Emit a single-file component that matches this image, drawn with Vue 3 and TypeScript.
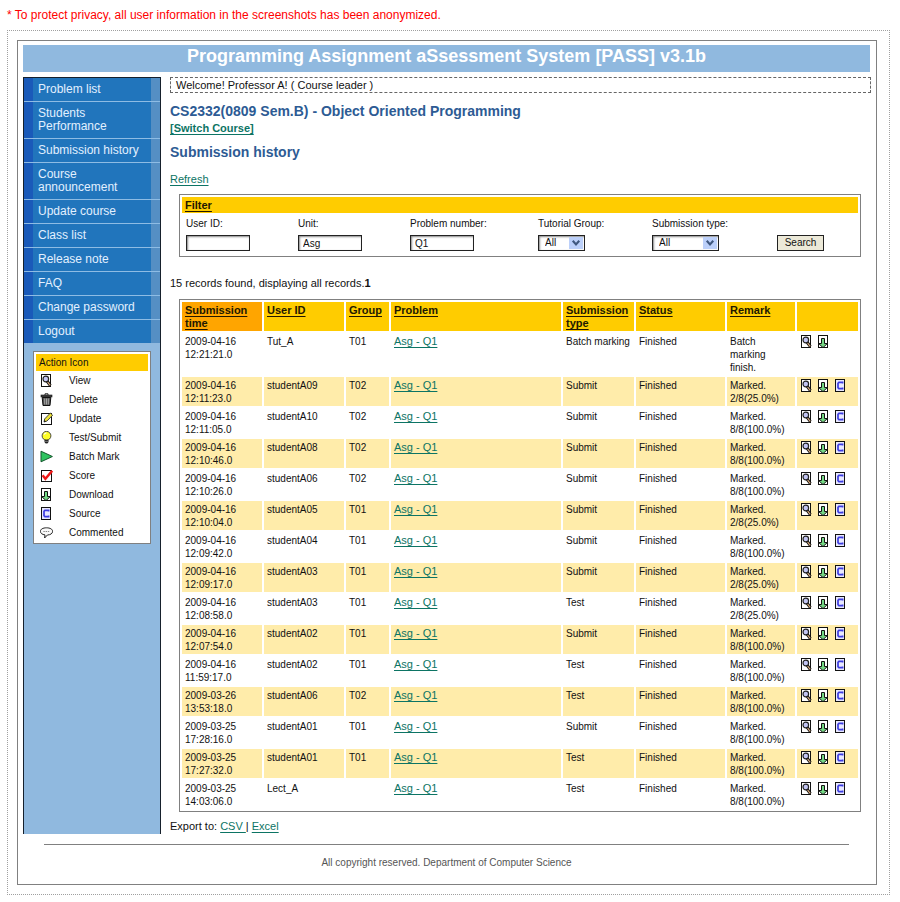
<script setup lang="ts">
import { ref, h, type FunctionalComponent } from 'vue'

type IconName = 'view' | 'delete' | 'update' | 'test' | 'batch' | 'score' | 'download' | 'source' | 'comment'

interface Shape {
  tag: string
  attrs: Record<string, string | number>
}

interface Submission {
  date: string
  time: string
  user: string
  group: string
  kind: string
  remark: string[]
  source: boolean
}

const s = (tag: string, attrs: Record<string, string | number>): Shape => ({ tag, attrs })
const page = (fill: string) => s('rect', { x: 1.5, y: 0.5, width: 9, height: 12, fill, stroke: '#111' })

const shapes: Record<IconName, Shape[]> = {
  view: [
    page('#fff'),
    s('path', { d: 'M7 7 L10.4 11.6', stroke: '#111', 'stroke-width': 3 }),
    s('path', { d: 'M7.6 8 L10.2 11.4', stroke: '#e0b080', 'stroke-width': 1.2 }),
    s('circle', { cx: 5.8, cy: 5, r: 2.8, fill: '#c3c6f4', stroke: '#222', 'stroke-width': 1.2 }),
  ],
  delete: [
    s('path', { d: 'M5 2 V0.8 H8 V2', fill: 'none', stroke: '#222' }),
    s('rect', { x: 1, y: 2, width: 11, height: 2, fill: '#444', stroke: '#111', 'stroke-width': 0.6 }),
    s('path', { d: 'M2.2 4.5 H10.8 L10 12.5 H3 Z', fill: '#555', stroke: '#111' }),
    s('path', { d: 'M4.7 5.5 V11.5 M6.5 5.5 V11.5 M8.3 5.5 V11.5', stroke: '#bbb', 'stroke-width': 0.8 }),
  ],
  update: [
    s('rect', { x: 1.5, y: 1.5, width: 10, height: 11, fill: '#fff', stroke: '#111' }),
    s('path', { d: 'M4 10 L4.6 7 L10.4 1 L12.6 3.2 L7 9 Z', fill: '#f0e53a', stroke: '#333', 'stroke-width': 0.9 }),
    s('path', { d: 'M4 10 L4.5 8 L6 9.4 Z', fill: '#111' }),
  ],
  test: [
    s('circle', { cx: 6.5, cy: 4.8, r: 4.4, fill: '#ffff28', stroke: '#333', 'stroke-width': 0.9 }),
    s('path', { d: 'M4.2 3.6 Q4.8 2.2 6.4 2', fill: 'none', stroke: '#fff', 'stroke-width': 1.2 }),
    s('path', { d: 'M4.5 8.8 H8.5 V11 Q8 12.6 6.5 12.6 Q5 12.6 4.5 11 Z', fill: '#222' }),
    s('path', { d: 'M5 10.4 H8', stroke: '#aaa', 'stroke-width': 0.6 }),
  ],
  batch: [s('path', { d: 'M1 1.2 L12.4 6.5 L1 11.8 Z', fill: '#2fc35f', stroke: '#14552c', 'stroke-width': 1 })],
  score: [
    s('rect', { x: 1.5, y: 1.5, width: 10, height: 11, fill: '#fff', stroke: '#111' }),
    s('path', { d: 'M2.6 6.2 L5.4 9.8 L12.2 1.8', fill: 'none', stroke: '#f01818', 'stroke-width': 2.4 }),
  ],
  download: [
    page('#fff'),
    s('path', { d: 'M4.5 3.5 H7.5 V8.5 H10.4 L6 12.6 L1.6 8.5 H4.5 Z', fill: '#74d884', stroke: '#111' }),
  ],
  source: [
    page('#e8e8ff'),
    s('path', { d: 'M8.6 4.6 V3.4 H4.9 L4 4.3 V8.7 L4.9 9.6 H8.6 V8.4', fill: 'none', stroke: '#3c3ce0', 'stroke-width': 1.7 }),
  ],
  comment: [
    s('path', {
      d: 'M6.5 1.8 C10 1.8 12.6 3.2 12.6 5.3 C12.6 7.6 10.4 8.9 7.4 9 L4.6 12 L5 8.9 C2.2 8.6 0.4 7.2 0.4 5.3 C0.4 3.2 3 1.8 6.5 1.8 Z',
      fill: '#fafafa', stroke: '#222',
    }),
    s('path', { d: 'M3.4 5.5 H9.8', stroke: '#888', 'stroke-width': 1, 'stroke-dasharray': '1.4 0.8' }),
  ],
}

const Icon: FunctionalComponent<{ name: IconName }> = (props) =>
  h('svg', { width: 13, height: 13, viewBox: '0 0 13 13', 'aria-hidden': 'true' },
    shapes[props.name].map((shape) => h(shape.tag, shape.attrs)))
Icon.props = ['name']

const menu: string[] = [
  'Problem list', 'Students Performance', 'Submission history', 'Course announcement', 'Update course',
  'Class list', 'Release note', 'FAQ', 'Change password', 'Logout',
]

const legend: { icon: IconName; label: string }[] = [
  { icon: 'view', label: 'View' },
  { icon: 'delete', label: 'Delete' },
  { icon: 'update', label: 'Update' },
  { icon: 'test', label: 'Test/Submit' },
  { icon: 'batch', label: 'Batch Mark' },
  { icon: 'score', label: 'Score' },
  { icon: 'download', label: 'Download' },
  { icon: 'source', label: 'Source' },
  { icon: 'comment', label: 'Commented' },
]

const columns: string[] = ['Submission time', 'User ID', 'Group', 'Problem', 'Submission type', 'Status', 'Remark']

const row = (date: string, time: string, user: string, group: string, kind: string, score: string): Submission =>
  ({ date, time, user, group, kind, remark: ['Marked.', score], source: true })

const full = '8/8(100.0%)'
const quarter = '2/8(25.0%)'

const rows: Submission[] = [
  { date: '2009-04-16', time: '12:21:21.0', user: 'Tut_A', group: 'T01', kind: 'Batch marking', remark: ['Batch', 'marking', 'finish.'], source: false },
  row('2009-04-16', '12:11:23.0', 'studentA09', 'T02', 'Submit', quarter),
  row('2009-04-16', '12:11:05.0', 'studentA10', 'T02', 'Submit', full),
  row('2009-04-16', '12:10:46.0', 'studentA08', 'T02', 'Submit', full),
  row('2009-04-16', '12:10:26.0', 'studentA06', 'T02', 'Submit', full),
  row('2009-04-16', '12:10:04.0', 'studentA05', 'T01', 'Submit', quarter),
  row('2009-04-16', '12:09:42.0', 'studentA04', 'T01', 'Submit', full),
  row('2009-04-16', '12:09:17.0', 'studentA03', 'T01', 'Submit', quarter),
  row('2009-04-16', '12:08:58.0', 'studentA03', 'T01', 'Test', quarter),
  row('2009-04-16', '12:07:54.0', 'studentA02', 'T01', 'Submit', full),
  row('2009-04-16', '11:59:17.0', 'studentA02', 'T01', 'Test', full),
  row('2009-03-26', '13:53:18.0', 'studentA06', 'T02', 'Test', full),
  row('2009-03-25', '17:28:16.0', 'studentA01', 'T01', 'Submit', full),
  row('2009-03-25', '17:27:32.0', 'studentA01', 'T01', 'Test', full),
  row('2009-03-25', '14:03:06.0', 'Lect_A', '', 'Test', full),
]

const userId = ref('')
const unit = ref('Asg')
const problem = ref('Q1')
const tutorial = ref('All')
const kind = ref('All')
</script>

<template>
  <div class="page">
    <p class="notice">* To protect privacy, all user information in the screenshots has been anonymized.</p>
    <div class="outer">
      <div class="frame">
        <header class="banner"><h1>Programming Assignment aSsessment System [PASS] v3.1b</h1></header>
        <div class="body">
          <aside class="side">
            <nav>
              <ul class="menu">
                <li v-for="item in menu" :key="item"><a href="#">{{ item }}</a></li>
              </ul>
            </nav>
            <section class="legend">
              <h2>Action Icon</h2>
              <ul>
                <li v-for="entry in legend" :key="entry.label">
                  <Icon :name="entry.icon" /><span>{{ entry.label }}</span>
                </li>
              </ul>
            </section>
          </aside>

          <main class="main">
            <p class="welcome">Welcome! Professor A! ( Course leader )</p>
            <h2 class="heading">CS2332(0809 Sem.B) - Object Oriented Programming</h2>
            <a class="switch" href="#">[Switch Course]</a>
            <h2 class="heading sub">Submission history</h2>
            <a class="refresh" href="#">Refresh</a>

            <form class="filter" @submit.prevent>
              <h3><a href="#">Filter</a></h3>
              <div class="fields">
                <div class="field">
                  <label for="user-id">User ID:</label>
                  <input id="user-id" v-model="userId" type="text" />
                </div>
                <div class="field">
                  <label for="unit">Unit:</label>
                  <input id="unit" v-model="unit" type="text" />
                </div>
                <div class="field">
                  <label for="problem">Problem number:</label>
                  <input id="problem" v-model="problem" type="text" />
                </div>
                <div class="field">
                  <label for="tutorial">Tutorial Group:</label>
                  <span class="pick">
                    <select id="tutorial" v-model="tutorial"><option>All</option></select>
                    <svg class="arrow" viewBox="0 0 13 11" aria-hidden="true"><path d="M3.5 3.5 L6.5 6.8 L9.5 3.5" /></svg>
                  </span>
                </div>
                <div class="field">
                  <label for="kind">Submission type:</label>
                  <span class="pick wide">
                    <select id="kind" v-model="kind"><option>All</option></select>
                    <svg class="arrow" viewBox="0 0 13 11" aria-hidden="true"><path d="M3.5 3.5 L6.5 6.8 L9.5 3.5" /></svg>
                  </span>
                </div>
                <div class="field action"><button type="submit">Search</button></div>
              </div>
            </form>

            <p class="count">15 records found, displaying all records.<b>1</b></p>

            <table class="records">
              <colgroup>
                <col class="c-time" /><col class="c-user" /><col class="c-group" /><col />
                <col class="c-type" /><col class="c-status" /><col class="c-remark" /><col class="c-tools" />
              </colgroup>
              <thead>
                <tr>
                  <th v-for="column in columns" :key="column" scope="col"><a href="#">{{ column }}</a></th>
                  <th scope="col"></th>
                </tr>
              </thead>
              <tbody>
                <tr v-for="item in rows" :key="item.date + item.time">
                  <td>{{ item.date }}<br />{{ item.time }}</td>
                  <td>{{ item.user }}</td>
                  <td>{{ item.group }}</td>
                  <td><a class="problem" href="#">Asg - Q1</a></td>
                  <td>{{ item.kind }}</td>
                  <td>Finished</td>
                  <td><div v-for="line in item.remark" :key="line">{{ line }}</div></td>
                  <td>
                    <div class="tools">
                      <a href="#" aria-label="View"><Icon name="view" /></a>
                      <a href="#" aria-label="Download"><Icon name="download" /></a>
                      <a v-if="item.source" href="#" aria-label="Source"><Icon name="source" /></a>
                    </div>
                  </td>
                </tr>
              </tbody>
            </table>

            <p class="export">Export to: <a href="#">CSV </a>| <a href="#">Excel</a></p>
          </main>
        </div>
        <footer class="foot">All copyright reserved. Department of Computer Science</footer>
      </div>
    </div>
  </div>
</template>

<style>
body {
  background: #fff;
}
</style>

<style scoped>
.page {
  padding: 8px 10px 8px 7px;
  font: 11px/13px "Liberation Sans", Arial, sans-serif;
  color: #111;
}
.page * {
  box-sizing: border-box;
}
h1, h2, h3, p, ul {
  margin: 0;
  padding: 0;
}
ul {
  list-style: none;
}
a {
  color: #0c7464;
  text-underline-offset: 2px;
}
.notice {
  font-size: 12px;
  line-height: 14px;
  color: #f00;
}
.outer {
  margin-top: 8px;
  padding: 9px 12px 9px 9px;
  border: 1px dotted #a0a0a0;
}
.frame {
  padding: 4px 5px 0;
  border: 1px solid #808080;
}
.banner {
  height: 27px;
  margin-right: 1px;
  background: #90b9df;
}
h1 {
  font-size: 18px;
  line-height: 22px;
  text-align: center;
  color: #fff;
}
.body {
  display: flex;
  align-items: stretch;
  gap: 9px;
  margin-top: 5px;
}
.side {
  flex: none;
  width: 138px;
  background: #90b9df;
  border: 1px solid #16202c;
  border-bottom: 0;
}
.menu li + li {
  border-top: 1px solid #8ebce4;
}
.menu a {
  display: block;
  padding: 5px 0 5px 5px;
  font-size: 12px;
  line-height: 13px;
  color: #e2f0ff;
  text-decoration: none;
  background: #2175bc;
  border-left: 9px solid #1a5ab9;
  border-right: 9px solid #558fc4;
}
.legend {
  width: 118px;
  margin: 8px 0 0 9px;
  padding: 2px 2px 1px;
  background: #fff;
  border: 1px solid #808080;
}
.legend h2 {
  padding: 2px 3px;
  font-size: 10px;
  line-height: 13px;
  font-weight: 400;
  background: #fc0;
}
.legend li {
  display: flex;
  align-items: center;
  gap: 16px;
  height: 19px;
  padding-left: 4px;
  font-size: 10px;
}
.main {
  flex: 1;
  min-width: 0;
}
.welcome {
  height: 16px;
  padding: 0 5px;
  line-height: 14px;
  border: 1px dashed #666;
}
.heading {
  margin-top: 9px;
  font-size: 14px;
  line-height: 18px;
  color: #2d5b94;
}
.switch {
  display: block;
  width: fit-content;
  margin-top: 2px;
  font-weight: 700;
}
.heading.sub {
  margin-top: 8px;
}
.refresh {
  display: block;
  width: fit-content;
  margin-top: 11px;
  line-height: 14px;
}
.filter {
  margin: 8px 10px 0 9px;
  padding: 2px;
  border: 1px solid #808080;
}
.filter h3 {
  padding: 2px 3px 1px;
  font-size: 11px;
  line-height: 13px;
  background: #fc0;
}
.filter h3 a,
.records th a {
  color: #221800;
}
.fields {
  display: grid;
  grid-template-columns: 112fr 112fr 128fr 114fr 125fr 81fr;
  padding: 4px 0 3px 4px;
}
.field {
  display: flex;
  flex-direction: column;
  align-items: flex-start;
  gap: 5px;
  font-size: 10px;
}
.field.action {
  justify-content: flex-end;
}
input,
select,
button {
  height: 16px;
  margin: 0;
  padding: 0 4px;
  font: 10px/12px "Liberation Sans", Arial, sans-serif;
  color: #111;
  background: #fff;
  border: 1px solid #222;
  border-radius: 0;
}
input,
select {
  box-shadow: inset 1px 1px 2px #888;
}
input {
  width: 64px;
}
select {
  width: 100%;
  padding-left: 6px;
  appearance: none;
}
.pick {
  position: relative;
  width: 47px;
  height: 16px;
}
.pick.wide {
  width: 67px;
}
.arrow {
  position: absolute;
  top: 2px;
  right: 2px;
  width: 14px;
  height: 12px;
  background: #bcd0fa;
  fill: none;
  stroke: #40587f;
  stroke-width: 2;
  pointer-events: none;
}
button {
  width: 47px;
  background: #ece9d8;
}
.count {
  margin-top: 19px;
  line-height: 14px;
}
.records {
  width: calc(100% - 19px);
  margin: 9px 10px 0 9px;
  table-layout: fixed;
  border-collapse: separate;
  border-spacing: 2px;
  border: 1px solid #808080;
  font-size: 10px;
}
.c-time { width: 80px; }
.c-user { width: 80px; }
.c-group { width: 43px; }
.c-type { width: 71px; }
.c-status { width: 89px; }
.c-remark { width: 68px; }
.c-tools { width: 61px; }
.records th {
  padding: 2px 3px 1px;
  font-size: 11px;
  text-align: left;
  vertical-align: top;
  background: #fc0;
}
.records th:first-child {
  background: #ffa500;
}
.records td {
  padding: 2px 3px 1px;
  vertical-align: top;
}
.records tbody tr:nth-child(even) td {
  background: #ffecaa;
}
.problem {
  font-size: 11px;
}
.tools {
  display: flex;
  gap: 4px;
}
.tools a {
  display: block;
  height: 13px;
}
.export {
  margin-top: 7px;
  padding-bottom: 1px;
  line-height: 14px;
}
.foot {
  margin: 10px 22px 0 21px;
  padding: 12px 0 16px;
  font-size: 10px;
  line-height: 11px;
  text-align: center;
  color: #555;
  border-top: 1px solid #808080;
}
</style>
